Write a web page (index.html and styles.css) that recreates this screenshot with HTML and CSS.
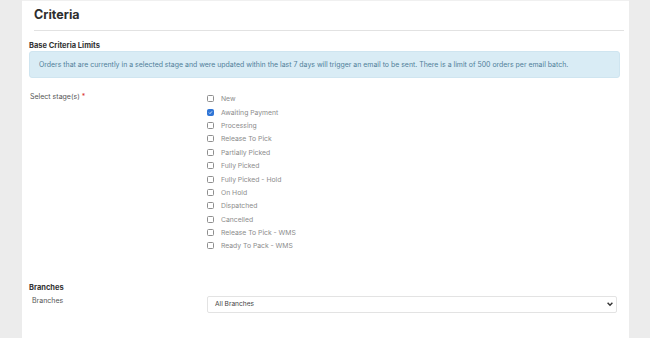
FILE: index.html
```html
<!DOCTYPE html>
<html>

<head>
  <title>Criteria</title>
  <meta name="viewport" content="width=device-width, initial-scale=1.0">
  <link rel="stylesheet" href="styles.css">
</head>

<body>
  <div class="container">
    <div class="card">
      <div class="header">
        <h1>Criteria</h1>
      </div>

      <div class="section">
        <h2>Base Criteria Limits</h2>
        <div class="alert">
          Orders that are currently in a selected stage and were updated within the last 7 days will trigger an email to be sent. There is a limit of 500 orders per email batch.
        </div>
      </div>

      <div class="row stages">
        <div class="label">Select stage(s) <span class="required">*</span></div>
        <div class="field">
          <label class="check"><span class="box"></span>New</label>
          <label class="check"><span class="box checked"><svg viewBox="0 0 8 8" width="7" height="7"><path d="M1.6 4.2 L3.2 5.8 L6.4 2.2" fill="none" stroke="white" stroke-width="1.3"/></svg></span>Awaiting Payment</label>
          <label class="check"><span class="box"></span>Processing</label>
          <label class="check"><span class="box"></span>Release To Pick</label>
          <label class="check"><span class="box"></span>Partially Picked</label>
          <label class="check"><span class="box"></span>Fully Picked</label>
          <label class="check"><span class="box"></span>Fully Picked - Hold</label>
          <label class="check"><span class="box"></span>On Hold</label>
          <label class="check"><span class="box"></span>Dispatched</label>
          <label class="check"><span class="box"></span>Cancelled</label>
          <label class="check"><span class="box"></span>Release To Pick - WMS</label>
          <label class="check"><span class="box"></span>Ready To Pack - WMS</label>
        </div>
      </div>

      <div class="section branches">
        <h2>Branches</h2>
        <div class="row">
          <div class="label sub">Branches</div>
          <div class="field">
            <div class="select">
              <span>All Branches</span>
              <svg viewBox="0 0 10 10" width="8" height="8"><path d="M2 3.5 L5 6.5 L8 3.5" fill="none" stroke="#333" stroke-width="1.8"/></svg>
            </div>
          </div>
        </div>
      </div>
    </div>
  </div>
</body>
</html>
```

FILE: styles.css
```css
/* variables */
:root {
  --bg-color: #ececec;
  --font-color: #333;
  --muted: #8c8c8c;
  --line: #e2e2e2;
}

* {
  box-sizing: border-box;
  font-family: 'Inter', 'Liberation Sans', sans-serif;
}

body,
html {
  margin: 0;
  padding: 0;
  overflow: hidden;
  background: var(--bg-color);
  color: var(--font-color);
}

/* card */
.container {
  width: 650px;
  height: 338px;
  padding: 0 21px 0 22px;
}

.card {
  background: white;
  height: 100%;
  border-top: 1px solid #f0f0f0;
  padding: 0 9px 0 7px;
}

.header {
  margin: 0 -4px 0 5px;
  padding: 7px 0 8px;
  border-bottom: 1px solid var(--line);
}

h1 {
  margin: 0;
  font-size: 12.5px;
  font-weight: 700;
  line-height: 14px;
  color: #2e2e2e;
}

h2 {
  margin: 0;
  font-size: 7.5px;
  font-weight: 700;
  line-height: 10px;
  color: #333;
}

.section {
  padding-top: 10px;
}

.alert {
  background: #d9ecf5;
  border: 1px solid #cfe5f0;
  border-radius: 3px;
  padding: 8px 8px 8px 9px;
  font-size: 6.95px;
  line-height: 9px;
  color: #50809a;
}

/* form rows */
.row {
  display: flex;
}

.stages {
  padding-top: 14px;
}

.label {
  width: 178px;
  padding-left: 1px;
  font-size: 7px;
  line-height: 9px;
  color: #555;
}

.label.sub {
  padding-left: 3px;
}

.required {
  color: #d9342b;
}

.field {
  flex: 1;
}

.check {
  display: flex;
  align-items: center;
  height: 13.4px;
  font-size: 6.8px;
  color: var(--muted);
}

.box {
  width: 7px;
  height: 7px;
  border: 1px solid #8f8f8f;
  border-radius: 1.5px;
  margin-right: 7px;
  display: flex;
  align-items: center;
  justify-content: center;
}

.box.checked {
  background: #2f75d6;
  border-color: #2f75d6;
}

.branches {
  padding-top: 30px;
}

.branches .row {
  padding-top: 3px;
}

.select {
  width: 410px;
  height: 17px;
  border: 1px solid #e3e3e3;
  border-radius: 2px;
  display: flex;
  align-items: center;
  justify-content: space-between;
  padding: 0 2px 0 7px;
  font-size: 6.6px;
  color: #444;
}
```
